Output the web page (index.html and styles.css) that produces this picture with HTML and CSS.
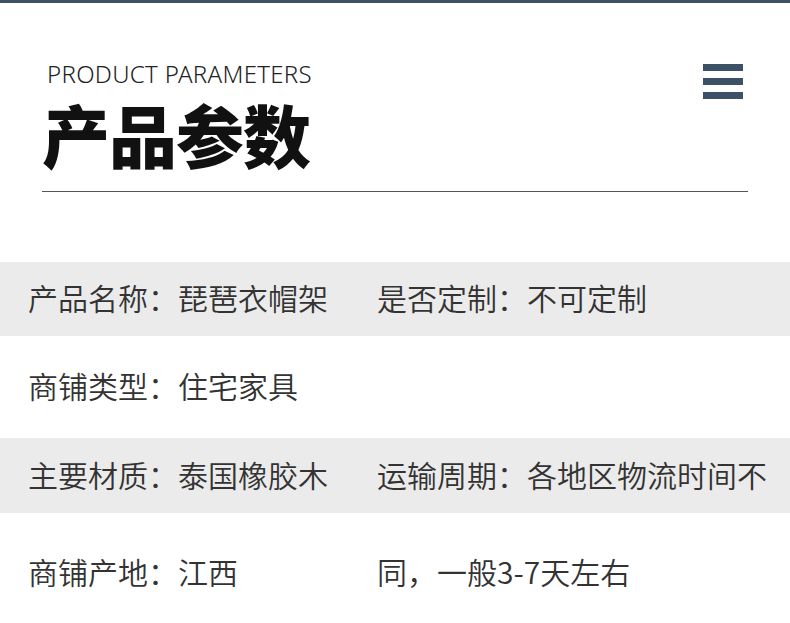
FILE: index.html
```html
<!DOCTYPE html>
<html lang="zh-CN">
<head>
<meta charset="utf-8">
<link rel="stylesheet" href="styles.css">
</head>
<body>
<div class="topbar"></div>
<header class="head">
  <div class="titles">
    <div class="en">PRODUCT PARAMETERS</div>
    <h1 class="zh">产品参数</h1>
  </div>
  <div class="menu" aria-label="menu">
    <span></span><span></span><span></span>
  </div>
</header>
<div class="rule"></div>
<div class="params">
  <div class="row gray r1">
    <div class="cell">产品名称：琵琶衣帽架</div>
    <div class="cell">是否定制：不可定制</div>
  </div>
  <div class="row r2">
    <div class="cell">商铺类型：住宅家具</div>
    <div class="cell"></div>
  </div>
  <div class="row gray r3">
    <div class="cell">主要材质：泰国橡胶木</div>
    <div class="cell">运输周期：各地区物流时间不</div>
  </div>
  <div class="row r4">
    <div class="cell">商铺产地：江西</div>
    <div class="cell">同，一般3-7天左右</div>
  </div>
</div>
</body>
</html>
```

FILE: styles.css
```css
html, body {
  margin: 0;
  padding: 0;
  background: #fff;
  width: 790px;
  height: 623px;
  overflow: hidden;
  font-family: "Noto Sans CJK SC", "Noto Sans", sans-serif;
}
.topbar {
  height: 3px;
  background: #3e5264;
}
.head {
  display: flex;
  justify-content: space-between;
  align-items: flex-start;
  padding: 0 47px 0 42px;
}
.titles {
  padding-top: 57px;
}
.en {
  font-family: "Noto Sans", sans-serif;
  font-weight: 300;
  font-size: 24px;
  line-height: 28px;
  color: #222;
  padding-left: 5px;
  letter-spacing: 0.3px;
}
.zh {
  margin: 12px 0 0 0;
  font-family: "Noto Sans CJK SC", sans-serif;
  font-weight: 900;
  font-size: 68px;
  line-height: 68px;
  color: #111;
  letter-spacing: -1px;
}
.menu {
  margin-top: 61px;
  width: 40px;
  display: flex;
  flex-direction: column;
  gap: 7px;
}
.menu span {
  display: block;
  height: 7px;
  background: #3d5166;
}
.rule {
  margin: 23px 42px 0 42px;
  height: 1px;
  background: #555;
}
.params {
  margin-top: 70px;
}
.row {
  display: grid;
  grid-template-columns: 349px 1fr;
  padding-left: 28px;
  padding-bottom: 4px;
  box-sizing: border-box;
  align-items: center;
  font-size: 30px;
  color: #333;
  font-weight: 350;
  white-space: nowrap;
}
.gray { background: #ebebeb; }
.r1 { height: 74px; }
.r2 { height: 102px; }
.r3 { height: 75px; }
.r4 { height: 120px; }
```
